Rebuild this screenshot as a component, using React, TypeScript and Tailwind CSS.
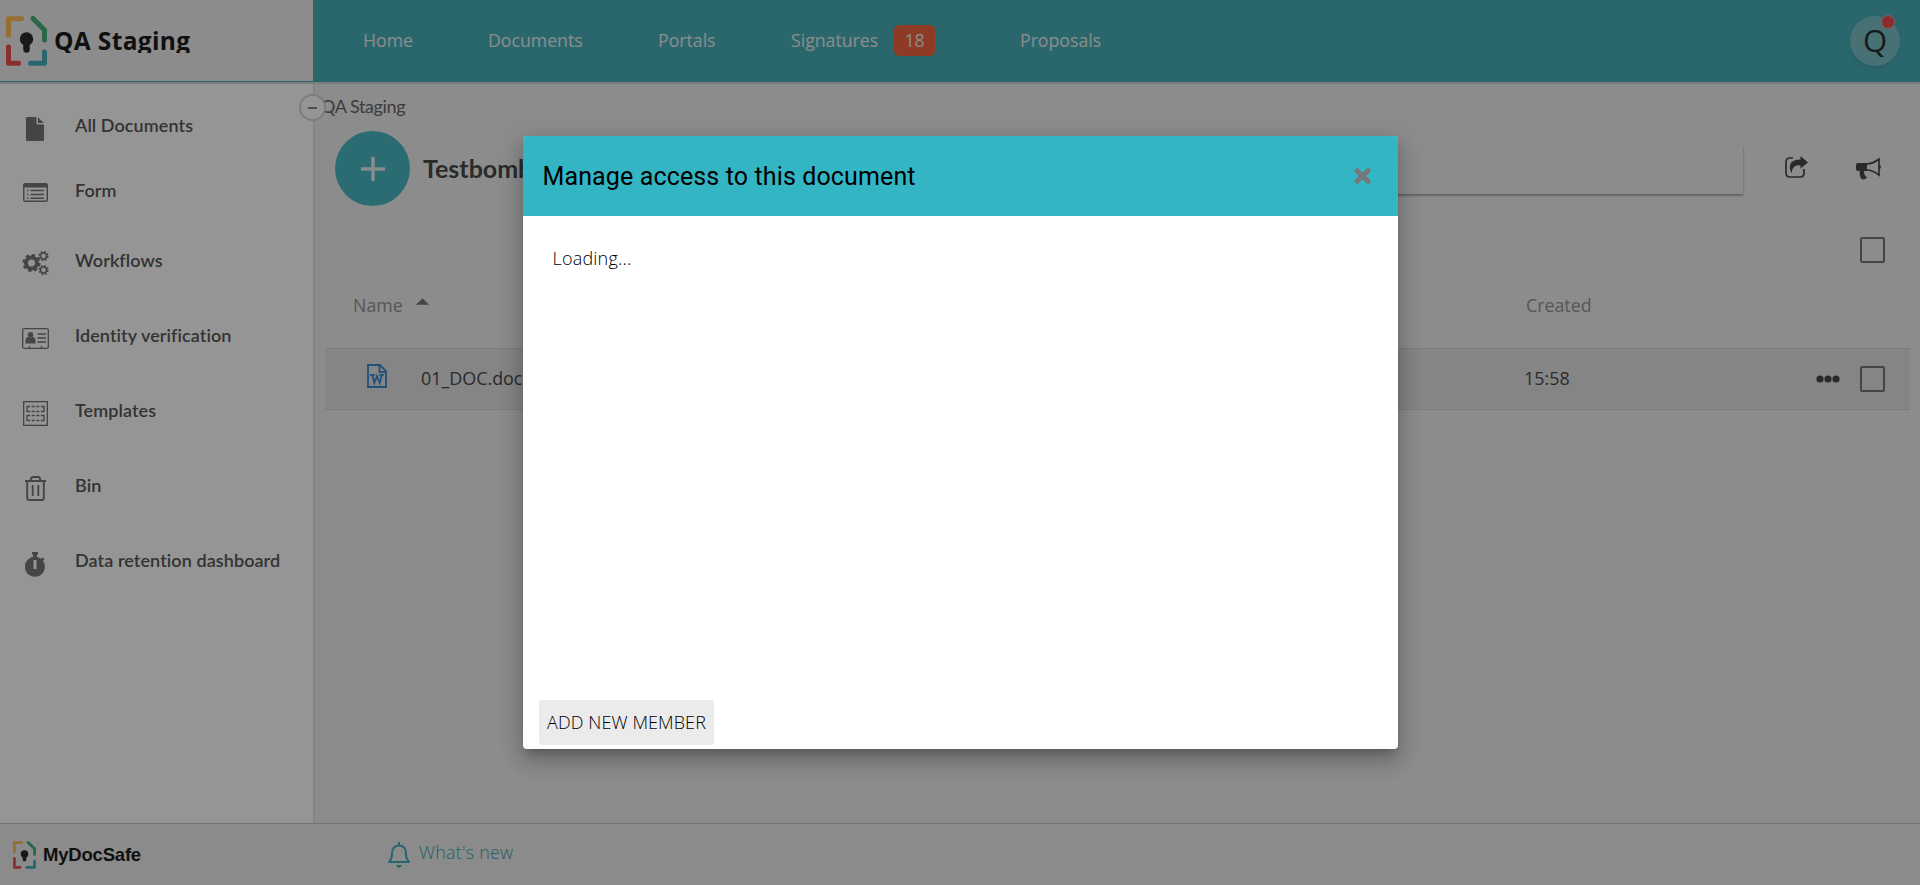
import React from "react";

const Logo = ({ className }: { className: string }) => (
  <svg viewBox="0 0 41 50" className={className} fill="none" strokeWidth="5" strokeLinecap="round" strokeLinejoin="round">
    <path d="M15.500 2.800H2.500V19" stroke="#fdb443" />
    <path d="M27 2.500L38.500 14V24" stroke="#31a866" />
    <path d="M2.500 31V47.200H12.500" stroke="#ea3d3d" />
    <path d="M38.500 36V47.200H24.500" stroke="#32a8b3" />
    <circle cx="20.500" cy="23" r="6.700" fill="#111216" />
    <path d="M20.500 27V33.500" stroke="#111216" strokeWidth="6.500" />
  </svg>
);

const FileIcon = () => (
  <svg width="18" height="24" viewBox="0 0 18 24" fill="#666">
    <path d="M1 0H10.500V6.500Q10.500 7.500 11.500 7.500H18V23Q18 24 17 24H1Q0 24 0 23V1Q0 0 1 0ZM12 0.200L17.800 6H12Z" />
  </svg>
);
const FormIcon = () => (
  <svg className="-mt-[3px]" width="25" height="19" viewBox="0 0 25 19" fill="none" stroke="#666" strokeWidth="1.500">
    <rect x=".75" y=".75" width="23.500" height="17.500" rx="1.500" />
    <path d="M1 2.500H24" strokeWidth="4" />
    <path d="M4 7.500H5.500M4 11.500H5.500M4 15.200H5.500M7.500 7.500H21M7.500 11.500H21M7.500 15.200H21" />
  </svg>
);
const GearsIcon = () => (
  <svg className="-mt-[2px]" width="27" height="24" viewBox="0 0 27 24" fill="none" stroke="#666">
    <circle cx="9.500" cy="12" r="5.500" strokeWidth="4" />
    <circle cx="9.500" cy="12" r="7.800" strokeWidth="2.400" strokeDasharray="3.400 2.726" />
    <circle cx="21.500" cy="5" r="3" strokeWidth="1.500" />
    <circle cx="21.500" cy="5" r="4.300" strokeWidth="1.600" strokeDasharray="1.900 1.477" />
    <circle cx="21.500" cy="19" r="3" strokeWidth="1.500" />
    <circle cx="21.500" cy="19" r="4.300" strokeWidth="1.600" strokeDasharray="1.900 1.477" />
  </svg>
);
const IdIcon = () => (
  <svg className="-mt-[1px]" width="27" height="21" viewBox="0 0 27 21" fill="none" stroke="#666" strokeWidth="1.300">
    <rect x=".7" y=".7" width="25.600" height="19.600" rx="1.500" />
    <path d="M15.500 6H24M15.500 10H24M15.500 14H24M7.500 18V20M19.500 18V20" />
    <circle cx="8.500" cy="6.700" r="2.800" fill="#666" stroke="none" />
    <path d="M3.500 15.500V12.500Q3.500 9 6.500 9Q8.500 10.500 10.500 9Q13.500 9 13.500 12.500V15.500Z" fill="#666" stroke="none" />
  </svg>
);
const TemplateIcon = () => (
  <svg className="-mt-[1px]" width="25" height="25" viewBox="0 0 25 25" fill="none" stroke="#666" strokeWidth="1.300">
    <rect x=".65" y=".65" width="23.700" height="23.700" />
    <path d="M4 5.500H21M4 10.500H21M4 14.500H21M4 19.500H21" strokeDasharray="3.200 1.400" />
    <path d="M4 5V11M21 5V11M4 14V20M21 14V20" />
  </svg>
);
const BinIcon = () => (
  <svg className="-mt-[1px]" width="21" height="25" viewBox="0 0 21 25" fill="none" stroke="#666" strokeWidth="1.900">
    <path d="M0 5H21M2.200 5V22.500Q2.200 24 3.700 24H17.300Q18.800 24 18.800 22.500V5M5.500 4.500Q6 1 8 1H13Q15 1 15.500 4.500" />
    <path d="M7.700 9V20M13.300 9V20" />
  </svg>
);
const TimerIcon = () => (
  <svg className="mt-[1px]" width="20" height="25" viewBox="0 0 20 25" fill="#666">
    <path fillRule="evenodd" d="M7 0H13V2.500H12V5A10 10 0 0 1 16 6.800L18 5.500L19.500 7L18 9A10 10 0 1 1 8 5V2.500H7ZM8.500 8V17H11.500V8Z" />
  </svg>
);

const items = [
  { label: "All Documents", icon: <FileIcon />, h: "h-[65px]" },
  { label: "Form", icon: <FormIcon />, h: "h-[70px]" },
  { label: "Workflows", icon: <GearsIcon />, h: "h-[75px]" },
  { label: "Identity verification", icon: <IdIcon />, h: "h-[75px]" },
  { label: "Templates", icon: <TemplateIcon />, h: "h-[75px]" },
  { label: "Bin", icon: <BinIcon />, h: "h-[75px]" },
  { label: "Data retention dashboard", icon: <TimerIcon />, h: "h-[75px]" },
];

const Checkbox = () => <span className="block h-[26px] w-[25px] rounded-[2px] border-2 border-[#666]" />;

export default function App() {
  return (
    <div className="relative flex h-[885px] w-[1920px] flex-col overflow-hidden bg-[#ededed] font-['Open_Sans',sans-serif] text-[#333]">
      <header className="flex h-[84px] shrink-0 border-b-2 border-[#cfcfcf]">
        <div className="flex w-[313px] items-center border-b border-[#32a8b3] bg-[#ededed] pl-[6px]">
          <Logo className="h-[50px] w-[41px]" />
          <div className="ml-[7px] h-[25px] overflow-hidden text-[24.500px] leading-[25px] font-bold tracking-[0.35px] text-black">
            QA Staging
          </div>
        </div>
        <nav className="flex flex-1 items-center bg-[#32a8b3] pl-[50px] text-[17.700px] text-[#ededed]">
          <span className="w-[125px] pb-[1px]">Home</span>
          <span className="w-[170px] pb-[1px]">Documents</span>
          <span className="w-[133px] pb-[1px]">Portals</span>
          <span className="w-[103px] pb-[1px]">Signatures</span>
          <span className="mb-[1px] flex h-[31px] w-[41px] items-center justify-center rounded-[5px] bg-[#f15329]">18</span>
          <span className="ml-[85px] pb-[1px]">Proposals</span>
          <div className="relative mr-[20px] ml-auto flex size-[50px] items-center justify-center rounded-full bg-[#6bbac1] pb-[1px] text-[31px] text-[#111] shadow-md">
            Q
            <span className="absolute top-[-1px] right-[5px] size-[14px] rounded-full border border-[#f88] bg-[#e63a3a]" />
          </div>
        </nav>
      </header>

      <div className="flex min-h-0 flex-1">
        <aside className="relative w-[315px] shrink-0 border-r-2 border-[#dcdcdc] bg-white pt-[24px] font-[Lato,sans-serif]">
          {items.map((item) => (
            <div key={item.label} className={"flex items-start " + item.h}>
              <span className="flex h-[42px] w-[70px] items-center justify-center text-[#666]">{item.icon}</span>
              <span className="ml-[5px] pt-[4px] text-[18px] leading-[26px] font-semibold tracking-[0.08px] whitespace-nowrap text-[#444]">
                {item.label}
              </span>
            </div>
          ))}
          <span className="absolute top-[10px] right-[-13px] z-10 flex size-[27px] items-center justify-center rounded-full border-2 border-[#d0d0d0] bg-white">
            <span className="h-[2px] w-[9px] bg-[#777]" />
          </span>
        </aside>

        <main className="flex flex-1 flex-col">
          <div className="h-[47px] pt-[9px] pl-[6px] font-[Lato,sans-serif] text-[18px] leading-[26px] tracking-[-0.4px] text-[#555]">QA Staging</div>
          <div className="flex h-[75px] items-center pl-[20px]">
            <span className="flex size-[75px] shrink-0 items-center justify-center rounded-full bg-[#33b1bd]">
              <svg width="24" height="24" viewBox="0 0 24 24" stroke="#e4eded" strokeWidth="3.500">
                <path d="M0 12H24M12 0V24" />
              </svg>
            </span>
            <span className="ml-[13px] w-[177px] overflow-hidden font-[Lato,sans-serif] text-[25px] font-bold whitespace-nowrap">Testbomb</span>
            <div className="mt-[2px] h-[49px] w-[1143px] shadow-[0_2px_2px_0_rgba(0,0,0,.24),0_1px_2px_0_rgba(0,0,0,.2)]" />
            <svg className="mt-[-3px] ml-[42px] shrink-0" width="23" height="22" viewBox="0 0 23 22" fill="none" stroke="#333" strokeWidth="1.700">
              <path d="M8 2H5Q1 2 1 6V17Q1 21 5 21H15Q19 21 19 17V13" />
              <path d="M15.500 0L23 6.500L15.500 12.500V9.500Q7.500 8 6.500 17.500Q0.500 4 15.500 3.500Z" fill="#333" stroke="none" />
            </svg>
            <svg className="ml-[48px] shrink-0" width="25" height="22" viewBox="0 0 25 22" fill="none" stroke="#333" strokeWidth="1.700">
              <path d="M10 6Q17 6 23 1V17Q17 12 10 12" />
              <path d="M2 5H11V13H8Q7.500 17 11 19.500Q8 23 5 20.500Q3 16 4 13H2Q0 13 0 11V7Q0 5 2 5ZM23 7Q25 7 25 9Q25 11 23 11Z" fill="#333" stroke="none" />
            </svg>
          </div>
          <div className="flex h-[86px] items-center justify-end pt-[2px] pr-[35px]"><Checkbox /></div>
          <div className="flex h-[56px] items-start pl-[38px] text-[17.800px] leading-[26px] text-[#888]">
            <span className="w-[49px]">Name</span>
            <svg className="mt-[6px] ml-[14px]" width="13" height="7" viewBox="0 0 12 6" fill="#666"><path d="M6 0L12 6H0Z" /></svg>
            <span className="ml-[1097px]">Created</span>
          </div>
          <div className="mr-[10px] ml-[10px] flex h-[62px] items-center border-y border-[#cfcfcf] bg-[#e0e0e0] pl-[42px] text-[17.900px]">
            <svg width="20" height="24" viewBox="0 0 20 24" fill="none" stroke="#247bcb" strokeWidth="1.800" className="mb-[7px]">
              <path d="M1 1H13L19 7V23H1ZM12.500 1V8H19" />
              <path d="M3 10.800H8M12 10.800H17M5.300 11L7.300 19L10 12L12.700 19L14.800 11" />
            </svg>
            <span className="ml-[34px] w-[1103px] pb-[1px]">01_DOC.docx</span>
            <span className="w-[292px] pb-[1px]">15:58</span>
            <svg width="24" height="8" viewBox="0 0 24 8" fill="#333"><circle cx="4" cy="4" r="3.600" /><circle cx="12" cy="4" r="3.600" /><circle cx="20" cy="4" r="3.600" /></svg>
            <span className="ml-[20px]"><Checkbox /></span>
          </div>
        </main>
      </div>

      <footer className="flex h-[62px] shrink-0 items-center border-t border-[#bdbdbd] bg-[#ebebeb] pl-[13px]">
        <Logo className="h-[28px] w-[23px]" />
        <span className="ml-[7px] w-[345px] font-['Liberation_Sans',sans-serif] text-[18.500px] font-bold tracking-[-0.2px] text-black">MyDocSafe</span>
        <svg width="22" height="26" viewBox="0 0 22 26" fill="none" stroke="#32a8b3" strokeWidth="2">
          <path d="M11 0V3M1 20Q4 17 4 12Q4 3.500 11 3.500Q18 3.500 18 12Q18 17 21 20Z" strokeLinejoin="round" />
          <path d="M8 23H14Q13 26 11 26Q9 26 8 23Z" fill="#32a8b3" stroke="none" />
        </svg>
        <span className="mb-[4px] ml-[9px] text-[18px] font-light tracking-[0.2px] text-[#229aa5]">What's new</span>
      </footer>

      <div className="absolute inset-0 z-20 bg-[rgba(33,33,33,0.48)]" />
      <div className="absolute top-[136px] left-[523px] z-30 flex h-[613px] w-[875px] flex-col overflow-hidden rounded-[4px] bg-white shadow-[0_7px_8px_-4px_rgba(0,0,0,.2),0_13px_19px_2px_rgba(0,0,0,.14),0_5px_24px_4px_rgba(0,0,0,.12)]">
        <div className="flex h-[80px] shrink-0 items-center justify-between bg-[#33b5c3] pr-[27px] pl-[19.500px]">
          <h2 className="pt-[2px] font-[Roboto,sans-serif] text-[25px] tracking-[0.130px] text-black">Manage access to this document</h2>
          <svg width="17" height="16" viewBox="0 0 17 16" stroke="#777" strokeWidth="5" strokeLinecap="round"><path d="M3 2.700L14 13.300M14 2.700L3 13.300" /></svg>
        </div>
        <p className="flex-1 pt-[29px] pl-[29.500px] text-[18px] leading-[26px] font-light tracking-[0.2px] text-black">Loading...</p>
        <button className="mb-[4px] ml-[16px] h-[45px] w-[175px] rounded-[3px] bg-[#ebebeb] text-[18px] font-light tracking-[0.1px] text-black">ADD NEW MEMBER</button>
      </div>
    </div>
  );
}
